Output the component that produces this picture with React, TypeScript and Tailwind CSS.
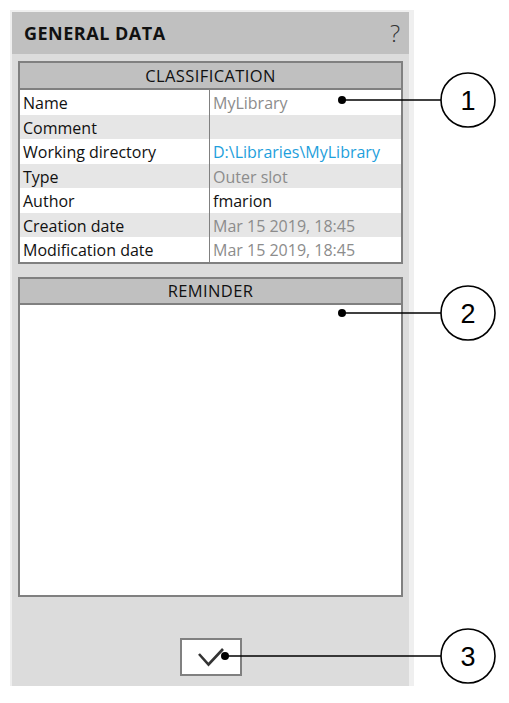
import React from 'react';

const rows: { label: string; value: string; tone: 'gray' | 'blue' | 'black' }[] = [
  { label: 'Name', value: 'MyLibrary', tone: 'gray' },
  { label: 'Comment', value: '', tone: 'gray' },
  { label: 'Working directory', value: 'D:\\Libraries\\MyLibrary', tone: 'blue' },
  { label: 'Type', value: 'Outer slot', tone: 'gray' },
  { label: 'Author', value: 'fmarion', tone: 'black' },
  { label: 'Creation date', value: 'Mar 15 2019, 18:45', tone: 'gray' },
  { label: 'Modification date', value: 'Mar 15 2019, 18:45', tone: 'gray' },
];

const toneClass = {
  gray: 'text-[#8c8c8c]',
  blue: 'text-[#1ea0dc]',
  black: 'text-[#111111]',
};

function Callouts() {
  const items = [
    { n: '1', dx: 342, y: 100 },
    { n: '2', dx: 342, y: 313 },
    { n: '3', dx: 225, y: 656 },
  ];
  return (
    <svg className="absolute left-0 top-0 pointer-events-none" width="509" height="703">
      {items.map((it) => (
        <g key={it.n}>
          <line x1={it.dx} y1={it.y} x2={441} y2={it.y} stroke="#000" strokeWidth="1.5" />
          <circle cx={it.dx} cy={it.y} r="4" fill="#000" />
          <circle cx={468} cy={it.y} r="27" fill="#fff" stroke="#000" strokeWidth="1.6" />
          <text
            x={468}
            y={it.y + 9.5}
            textAnchor="middle"
            fontFamily="'Liberation Sans', Arial, sans-serif"
            fontSize="27"
            fill="#000"
          >
            {it.n}
          </text>
        </g>
      ))}
    </svg>
  );
}

export default function App() {
  return (
    <div className="relative w-[509px] h-[703px] bg-white font-['Open_Sans',sans-serif]">
      <div className="absolute left-[10px] top-[10px] w-[404px] h-[676px] bg-[#efefef] pl-[2px] pt-[2px] pr-[5px]">
        <div className="flex flex-col h-full bg-[#dcdcdc]">
          {/* Title bar */}
          <div className="flex items-center justify-between h-[42px] bg-[#c0c0c0] pl-[12px] pr-[9px]">
            <span className="text-[18px] font-bold text-[#111] tracking-[0.5px]">GENERAL DATA</span>
            <span className="text-[24px] font-light text-[#333] leading-none">?</span>
          </div>

          <div className="flex flex-col px-[6px] pt-[7px]">
            {/* Classification */}
            <div className="border-2 border-[#808080] bg-white">
              <div className="h-[27px] bg-[#c0c0c0] border-b-2 border-[#808080] flex items-center justify-center pt-[1px] text-[16.5px] tracking-[0.4px] text-[#111]">
                CLASSIFICATION
              </div>
              {rows.map((r, i) => (
                <div
                  key={r.label}
                  className={`flex h-[24.5px] text-[16px] leading-none ${i % 2 === 0 ? 'bg-white' : 'bg-[#e6e6e6]'}`}
                >
                  <div className="w-[190px] shrink-0 border-r border-[#808080] pl-[3px] pt-[2px] flex items-center text-[#111]">
                    {r.label}
                  </div>
                  <div className={`pl-[3px] pt-[2px] flex items-center ${toneClass[r.tone]}`}>{r.value}</div>
                </div>
              ))}
            </div>

            {/* Reminder */}
            <div className="mt-[13px] h-[320px] border-2 border-[#808080] bg-white flex flex-col">
              <div className="h-[26px] bg-[#c0c0c0] border-b-2 border-[#808080] flex items-center justify-center pt-[1px] text-[16.5px] tracking-[0.4px] text-[#111]">
                REMINDER
              </div>
              <div className="flex-1" />
            </div>

            {/* Validate */}
            <div className="flex justify-center mt-[41px]">
              <button className="w-[62px] h-[38px] border-2 border-[#808080] bg-white flex items-center justify-center">
                <svg width="30" height="22" viewBox="0 0 30 22">
                  <polyline points="3,8 12.5,18.5 27,3" fill="none" stroke="#333" strokeWidth="2.6" />
                </svg>
              </button>
            </div>
          </div>
        </div>
      </div>
      <Callouts />
    </div>
  );
}
